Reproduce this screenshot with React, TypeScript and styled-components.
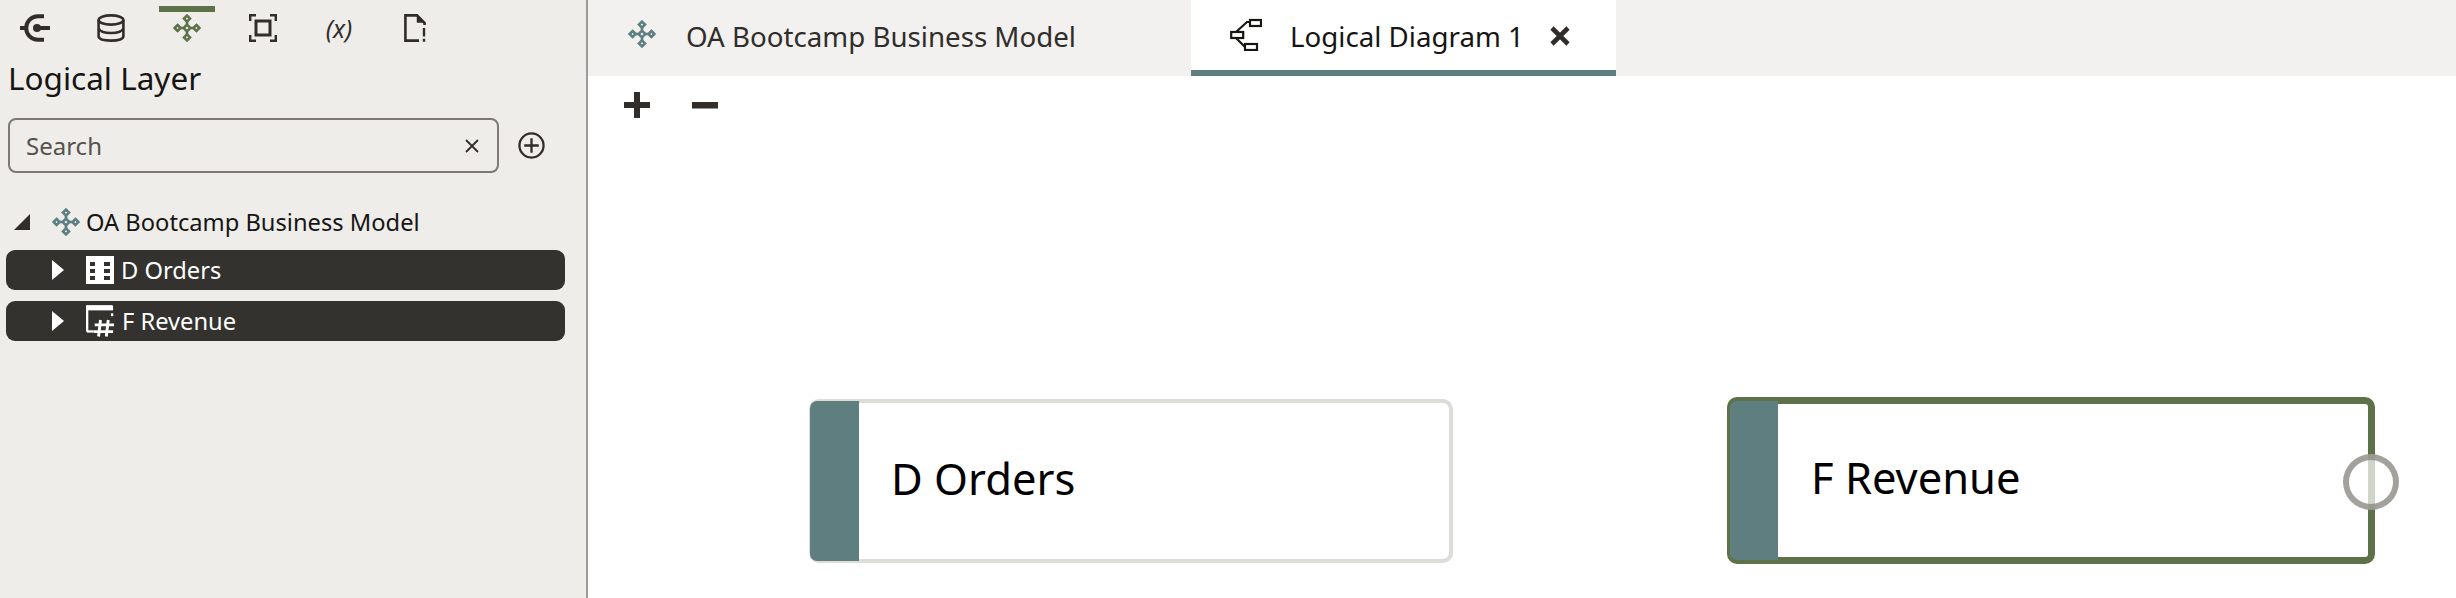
import styled, { createGlobalStyle } from "styled-components";

const GlobalStyle = createGlobalStyle`
  html, body {
    margin: 0;
    padding: 0;
    width: 2456px;
    height: 598px;
    overflow: hidden;
    background: #ffffff;
    font-family: "Noto Sans", "Open Sans", sans-serif;
    color: #161513;
  }
`;

const Page = styled.div`
  width: 2456px;
  height: 598px;
  display: flex;
`;

const Sidebar = styled.aside`
  width: 586px;
  height: 598px;
  flex: none;
  box-sizing: content-box;
  background: #eeede9;
  border-right: 2px solid #9c9a94;
`;

const ToolBar = styled.div`
  display: flex;
  gap: 20px;
  padding-left: 7px;
  padding-top: 6px;
`;

const Tool = styled.div<{ $active?: boolean }>`
  width: 56px;
  height: 36px;
  box-sizing: border-box;
  padding-top: 2px;
  border-top: 6px solid ${(p) => (p.$active ? "#5e7249" : "transparent")};
  display: flex;
  justify-content: center;
  color: ${(p) => (p.$active ? "#5e7249" : "#312d2a")};
`;

const VarLabel = styled.span`
  font-size: 25px;
  line-height: 28px;
  font-style: italic;
  color: #312d2a;
  white-space: nowrap;
`;

const Title = styled.h1`
  margin: 16px 0 0 8px;
  font-size: 31.5px;
  line-height: 40px;
  font-weight: 400;
`;

const SearchRow = styled.div`
  display: flex;
  align-items: center;
  gap: 19px;
  margin: 20px 0 0 8px;
`;

const SearchBox = styled.div`
  width: 491px;
  height: 55px;
  box-sizing: border-box;
  border: 2px solid #7d7a73;
  border-radius: 8px;
  display: flex;
  align-items: center;
  justify-content: space-between;
  padding: 0 18px 0 16px;
`;

const Placeholder = styled.span`
  font-size: 24px;
  color: #55524d;
`;

const Tree = styled.div`
  display: flex;
  flex-direction: column;
  margin-top: 33px;
`;

const RootRow = styled.div`
  height: 32px;
  display: flex;
  align-items: center;
  padding-left: 14px;
  font-size: 23.7px;
  margin-bottom: 12px;
  color: #161513;
  white-space: nowrap;
`;

const RootLabel = styled.span`
  margin-left: 6px;
`;

const ModelSlot = styled.span`
  margin-left: 22px;
  display: flex;
  color: #5f7e80;
`;

const EntityRow = styled.div`
  width: 559px;
  height: 40px;
  margin: 0 0 11px 6px;
  background: #33322e;
  border-radius: 9px;
  color: #ffffff;
  display: flex;
  align-items: center;
  padding-left: 46px;
  box-sizing: border-box;
  font-size: 23.7px;
  white-space: nowrap;
`;

const EntityLabel = styled.span`
  margin-left: 7px;
`;

const EntitySlot = styled.span`
  margin-left: 22px;
  display: flex;
`;

const Main = styled.main`
  flex: 1;
  min-width: 0;
  height: 598px;
  display: flex;
  flex-direction: column;
`;

const TabBar = styled.div`
  height: 76px;
  background: #f2f1ef;
  display: flex;
  flex: none;
`;

const Tab = styled.div<{ $active?: boolean }>`
  height: 76px;
  box-sizing: border-box;
  display: flex;
  align-items: center;
  background: ${(p) => (p.$active ? "#ffffff" : "transparent")};
  border-bottom: 6px solid ${(p) => (p.$active ? "#5f7e80" : "transparent")};
  padding: ${(p) => (p.$active ? "2px 46px 0 39px" : "2px 115px 0 40px")};
  font-size: 27.7px;
  color: ${(p) => (p.$active ? "#161513" : "#312d2a")};
  white-space: nowrap;
`;

const TabIcon = styled.span<{ $color: string; $gap: number }>`
  display: flex;
  margin-right: ${(p) => p.$gap}px;
  margin-top: -4px;
  color: ${(p) => p.$color};
`;

const CloseSlot = styled.span`
  display: flex;
  margin-left: 26px;
  color: #312d2a;
`;

const ZoomBar = styled.div`
  display: flex;
  gap: 42px;
  padding: 16px 0 0 36px;
  color: #312d2a;
`;

const Canvas = styled.div`
  position: relative;
  flex: 1;
`;

const Node = styled.div<{ $selected?: boolean; $left: number; $top: number; $width: number; $height: number }>`
  position: absolute;
  left: ${(p) => p.$left}px;
  top: ${(p) => p.$top}px;
  width: ${(p) => p.$width}px;
  height: ${(p) => p.$height}px;
  box-sizing: border-box;
  background: #ffffff;
  border: ${(p) => (p.$selected ? "7px solid #5e7249" : "4px solid #dddcd6")};
  border-radius: 10px;
  display: flex;
  align-items: center;
`;

const NodeBar = styled.div<{ $selected?: boolean; $width: number }>`
  position: absolute;
  left: ${(p) => (p.$selected ? "-4px" : "-3px")};
  top: ${(p) => (p.$selected ? "-3px" : "-2px")};
  bottom: ${(p) => (p.$selected ? "-3px" : "-2px")};
  width: ${(p) => p.$width}px;
  background: #5f7e80;
  border-radius: 7px 0 0 7px;
`;

const NodeLabel = styled.span<{ $left: number }>`
  margin-left: ${(p) => p.$left}px;
  margin-top: -7px;
  font-size: 43.5px;
  color: #000000;
  white-space: nowrap;
`;

const Port = styled.div`
  position: absolute;
  top: calc(50% + 1px);
  right: -31px;
  width: 56px;
  height: 56px;
  box-sizing: border-box;
  transform: translateY(-50%);
  border-radius: 50%;
  border: 6px solid rgba(140, 137, 130, 0.8);
  background: rgba(255, 255, 255, 0.7);
`;

function BackIcon() {
  return (
    <svg width="30" height="28" viewBox="0 0 30 28" fill="none" stroke="currentColor">
      <path d="M24 2.2 H18 A11.6 11.6 0 0 0 18 25.8 H24" strokeWidth="4" />
      <path d="M0 14 H6 M15 14 H30" strokeWidth="4" />
      <circle cx="17" cy="14" r="4" fill="currentColor" stroke="none" />
    </svg>
  );
}

function DatabaseIcon() {
  return (
    <svg width="28" height="28" viewBox="0 0 28 28" fill="none" stroke="currentColor" strokeWidth="2.6">
      <ellipse cx="14" cy="6" rx="12.4" ry="4.6" />
      <path d="M1.6 6 V22 C1.6 25 6 26.6 14 26.6 C22 26.6 26.4 25 26.4 22 V6" />
      <path d="M1.6 14.5 C3 17.6 7 19 14 19 C21 19 25 17.6 26.4 14.5" />
    </svg>
  );
}

function ModelIcon({ size = 28 }: { size?: number }) {
  return (
    <svg width={size} height={size} viewBox="0 0 28 28" fill="none" stroke="currentColor" strokeWidth="2.6">
      <path d="M14 7.5 V10 M14 18 V20.5 M7.5 14 H10 M18 14 H20.5" />
      <path d="M14 1.6 L17 4.6 L14 7.6 L11 4.6 Z" />
      <path d="M14 20.4 L17 23.4 L14 26.4 L11 23.4 Z" />
      <path d="M4.6 11 L7.6 14 L4.6 17 L1.6 14 Z" />
      <path d="M23.4 11 L26.4 14 L23.4 17 L20.4 14 Z" />
      <path d="M14 10.6 L17.4 14 L14 17.4 L10.6 14 Z" />
    </svg>
  );
}

function FocusIcon() {
  return (
    <svg width="28" height="28" viewBox="0 0 28 28" fill="none" stroke="currentColor">
      <path d="M1.2 7 V1.2 H7 M21 1.2 H26.8 V7 M26.8 21 V26.8 H21 M7 26.8 H1.2 V21" strokeWidth="2.4" />
      <rect x="7" y="7" width="14" height="14" strokeWidth="3" />
    </svg>
  );
}

function FileAlertIcon() {
  return (
    <svg width="22" height="28" viewBox="0 0 22 28" fill="none" stroke="currentColor">
      <path d="M15 26.6 H1.4 V1.4 H13 L20.6 9 V11" strokeWidth="2.6" />
      <path d="M13 1.5 V8.5 H20.5 Z" fill="currentColor" strokeWidth="0.5" />
      <path d="M20 14 V22.5 M20 24.8 V27.8" strokeWidth="2.4" />
    </svg>
  );
}

function SmallCross() {
  return (
    <svg width="14" height="14" viewBox="0 0 14 14" stroke="#312d2a" strokeWidth="1.8" fill="none">
      <path d="M1 1 L13 13 M13 1 L1 13" />
    </svg>
  );
}

function AddCircle() {
  return (
    <svg width="27" height="27" viewBox="0 0 26 26" stroke="#312d2a" fill="none" strokeWidth="2.2">
      <circle cx="13" cy="13" r="11.6" />
      <path d="M13 6 V20 M6 13 H20" />
    </svg>
  );
}

function ExpandedArrow() {
  return (
    <svg width="16" height="16" viewBox="0 0 16 16">
      <path d="M16 0 V16 H0 Z" fill="#312d2a" />
    </svg>
  );
}

function CollapsedArrow() {
  return (
    <svg width="12" height="20" viewBox="0 0 12 20">
      <path d="M0 0 L12 10 L0 20 Z" fill="#ffffff" />
    </svg>
  );
}

function DimensionIcon() {
  return (
    <svg width="28" height="28" viewBox="0 0 28 28">
      <rect width="28" height="28" fill="#ffffff" />
      <g fill="#33322e">
        <rect x="4" y="6" width="5" height="4" />
        <rect x="4" y="13" width="5" height="4" />
        <rect x="4" y="20" width="5" height="4" />
        <rect x="18" y="6" width="6" height="4" />
        <rect x="18" y="13" width="6" height="4" />
        <rect x="18" y="20" width="6" height="4" />
      </g>
    </svg>
  );
}

function FactIcon() {
  return (
    <svg width="29" height="32" viewBox="0 0 30 32" fill="none" stroke="#ffffff">
      <path d="M1.2 27 V1 H27" strokeWidth="2.4" />
      <rect x="1" y="0" width="27" height="5" fill="#ffffff" stroke="none" />
      <path d="M1 26.8 H8" strokeWidth="2.4" />
      <path d="M27 8 V11" strokeWidth="2.4" />
      <path d="M15 15 L13 32 M23 15 L21 32 M9 20 H29 M8 27 H28" strokeWidth="3" />
    </svg>
  );
}

function DiagramIcon() {
  return (
    <svg width="32" height="33" viewBox="0 0 32 33" fill="none" stroke="#161513" strokeWidth="2.2">
      <rect x="20" y="2" width="11" height="6" />
      <rect x="1.2" y="14" width="12" height="6" />
      <rect x="15" y="26" width="12" height="6" />
      <path d="M20 4 H17 L6 14 M6 20 L15 29" />
    </svg>
  );
}

function CloseIcon() {
  return (
    <svg width="20" height="20" viewBox="0 0 20 20" fill="none" stroke="currentColor" strokeWidth="4.6">
      <path d="M2 2 L18 18 M18 2 L2 18" />
    </svg>
  );
}

function PlusIcon() {
  return (
    <svg width="26" height="26" viewBox="0 0 26 26" fill="currentColor">
      <path d="M10 0 H16 V10 H26 V16 H16 V26 H10 V16 H0 V10 H10 Z" />
    </svg>
  );
}

function MinusIcon() {
  return (
    <svg width="26" height="26" viewBox="0 0 26 26" fill="currentColor">
      <rect x="0" y="10" width="26" height="6.5" />
    </svg>
  );
}

function App() {
  return (
    <>
      <GlobalStyle />
      <Page>
        <Sidebar>
          <ToolBar>
            <Tool><BackIcon /></Tool>
            <Tool><DatabaseIcon /></Tool>
            <Tool $active><ModelIcon /></Tool>
            <Tool><FocusIcon /></Tool>
            <Tool><VarLabel>(x)</VarLabel></Tool>
            <Tool><FileAlertIcon /></Tool>
          </ToolBar>
          <Title>Logical Layer</Title>
          <SearchRow>
            <SearchBox>
              <Placeholder>Search</Placeholder>
              <SmallCross />
            </SearchBox>
            <AddCircle />
          </SearchRow>
          <Tree>
            <RootRow>
              <ExpandedArrow />
              <ModelSlot><ModelIcon /></ModelSlot>
              <RootLabel>OA Bootcamp Business Model</RootLabel>
            </RootRow>
            <EntityRow>
              <CollapsedArrow />
              <EntitySlot><DimensionIcon /></EntitySlot>
              <EntityLabel>D Orders</EntityLabel>
            </EntityRow>
            <EntityRow>
              <CollapsedArrow />
              <EntitySlot><FactIcon /></EntitySlot>
              <EntityLabel>F Revenue</EntityLabel>
            </EntityRow>
          </Tree>
        </Sidebar>
        <Main>
          <TabBar>
            <Tab>
              <TabIcon $color="#5f7e80" $gap={30}><ModelIcon /></TabIcon>
              OA Bootcamp Business Model
            </Tab>
            <Tab $active>
              <TabIcon $color="#161513" $gap={28}><DiagramIcon /></TabIcon>
              Logical Diagram 1
              <CloseSlot><CloseIcon /></CloseSlot>
            </Tab>
          </TabBar>
          <ZoomBar>
            <PlusIcon />
            <MinusIcon />
          </ZoomBar>
          <Canvas>
            <Node $left={221} $top={281} $width={644} $height={164}>
              <NodeBar $width={49} />
              <NodeLabel $left={78}>D Orders</NodeLabel>
            </Node>
            <Node $selected $left={1139} $top={279} $width={648} $height={167}>
              <NodeBar $selected $width={48} />
              <NodeLabel $left={77}>F Revenue</NodeLabel>
              <Port />
            </Node>
          </Canvas>
        </Main>
      </Page>
    </>
  );
}

export default App;
